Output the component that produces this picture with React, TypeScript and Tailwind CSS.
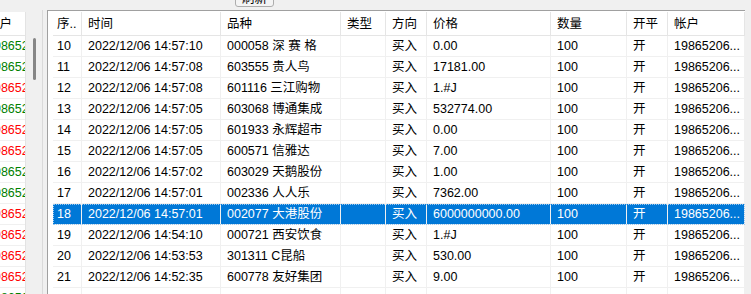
import React from "react";

const cols = [
  { w: "w-[29px]", pad: "pl-[4px]" },
  { w: "w-[139px]", pad: "pl-[6px]" },
  { w: "w-[120px]", pad: "pl-[6px]" },
  { w: "w-[45px]", pad: "pl-[6px]" },
  { w: "w-[41px]", pad: "pl-[6px]" },
  { w: "w-[124px]", pad: "pl-[6px]" },
  { w: "w-[76px]", pad: "pl-[6px]" },
  { w: "w-[41px]", pad: "pl-[6px]" },
  { w: "w-[77px]", pad: "pl-[6px]" },
];

const headers = ["序..", "时间", "品种", "类型", "方向", "价格", "数量", "开平", "帐户"];

const rows = [
  ["10", "14:57:10", "000058 深 赛 格", "0.00"],
  ["11", "14:57:08", "603555 贵人鸟", "17181.00"],
  ["12", "14:57:08", "601116 三江购物", "1.#J"],
  ["13", "14:57:05", "603068 博通集成", "532774.00"],
  ["14", "14:57:05", "601933 永辉超市", "0.00"],
  ["15", "14:57:05", "600571 信雅达", "7.00"],
  ["16", "14:57:02", "603029 天鹅股份", "1.00"],
  ["17", "14:57:01", "002336 人人乐", "7362.00"],
  ["18", "14:57:01", "002077 大港股份", "6000000000.00"],
  ["19", "14:54:10", "000721 西安饮食", "1.#J"],
  ["20", "14:53:53", "301311 C昆船", "530.00"],
  ["21", "14:52:35", "600778 友好集团", "9.00"],
];

// left list: true = green, false = red
const sideColors = [true, true, false, true, false, false, true, true, false, false, false, false, true];

function SidePanel() {
  return (
    <div className="mt-[2px] h-[282px] w-[26px] overflow-hidden border-r border-[#e3e3e3] bg-white">
      <div className="flex h-[24px] items-center border-b border-[#e5e5e5] pt-[2px]">
        <span className="ml-[-13px] whitespace-nowrap">帐户</span>
      </div>
      {sideColors.map((green, i) => (
        <div
          key={i}
          className={
            "flex h-[21px] items-center border-b border-[#f0f0f0] " +
            (green ? "text-[#008000]" : "text-[#ff0000]")
          }
        >
          <span className="ml-[-13px] whitespace-nowrap">19865206...</span>
        </div>
      ))}
    </div>
  );
}

function Row({ r, selected }: { r: string[]; selected?: boolean }) {
  const cells = [r[0], "2022/12/06 " + r[1], r[2], "", "买入", r[3], "100", "开", "19865206..."];
  return (
    <div
      className={
        "flex h-[21px] border-b border-[#f0f0f0] " +
        (selected ? "bg-[#0078d7] text-white outline outline-1 -outline-offset-1 outline-dotted outline-[#9cc8ee]" : "")
      }
    >
      {cells.map((c, i) => (
        <div
          key={i}
          className={`${cols[i].w} ${cols[i].pad} flex shrink-0 items-center overflow-hidden whitespace-nowrap border-r border-[#f0f0f0]`}
        >
          {c}
        </div>
      ))}
    </div>
  );
}

export default function App() {
  return (
    <div
      className="h-[294px] w-[751px] overflow-hidden bg-[#f0f0f0] text-[12.5px] leading-none text-black"
      style={{ fontFamily: '"Liberation Sans", "Noto Sans CJK SC", sans-serif' }}
    >
      <div className="flex h-[10px]">
        <div className="ml-[235px] mt-[-14px] flex h-[21px] w-[39px] items-center justify-center rounded-[3px] border border-[#adadad] bg-[#f4f4f4] pt-[5px]">
          刷新
        </div>
      </div>

      <div className="flex">
        <SidePanel />

        <div className="w-[16px]">
          <div className="ml-[7px] mt-[28px] h-[42px] w-[3px] rounded-full bg-[#868686]" />
        </div>
        <div className="h-[284px] w-[1px] bg-[#dadada]" />
        <div className="w-[4px]" />

        <div className="h-[284px] w-[698px] overflow-hidden border-l border-t border-[#a0a0a0] bg-white pl-[5px] pt-[1px]">
          <div className="flex h-[24px] border-b border-[#e5e5e5]">
            {headers.map((h, i) => (
              <div
                key={h}
                className={`${cols[i].w} ${cols[i].pad} flex shrink-0 items-center whitespace-nowrap border-r border-[#e5e5e5] pt-[2px]`}
              >
                {h}
              </div>
            ))}
          </div>
          {rows.map((r, i) => (
            <Row key={r[0]} r={r} selected={i === 8} />
          ))}
          <div className="flex h-[21px]">
            {cols.map((c, i) => (
              <div key={i} className={`${c.w} shrink-0 border-r border-[#f0f0f0]`} />
            ))}
          </div>
        </div>
      </div>
    </div>
  );
}
